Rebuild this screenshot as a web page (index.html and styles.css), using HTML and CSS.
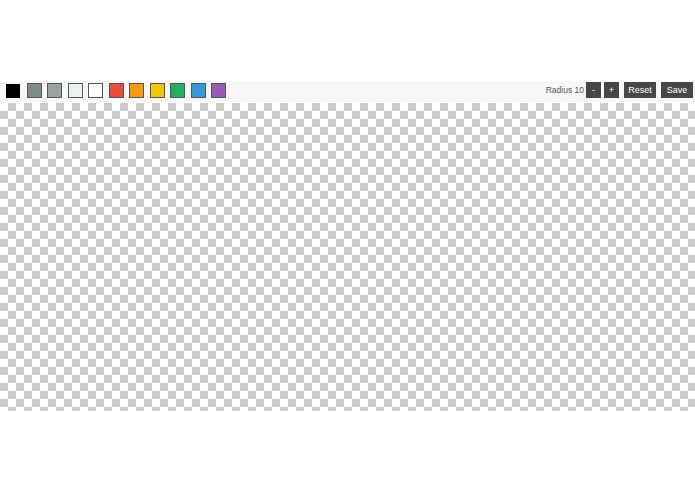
FILE: index.html
```html
<!DOCTYPE html>
<html>
<head>
<meta charset="utf-8">
<link rel="stylesheet" href="styles.css">
</head>
<body>
<div class="top-space"></div>
<div class="toolbar">
  <div class="swatches">
    <span class="swatch black"></span>
    <span class="swatch c2"></span>
    <span class="swatch c3"></span>
    <span class="swatch c4"></span>
    <span class="swatch c5"></span>
    <span class="swatch c6"></span>
    <span class="swatch c7"></span>
    <span class="swatch c8"></span>
    <span class="swatch c9"></span>
    <span class="swatch c10"></span>
    <span class="swatch c11"></span>
  </div>
  <div class="controls">
    <span class="radius">Radius 10</span>
    <button class="btn small">-</button>
    <button class="btn small">+</button>
    <button class="btn wide reset">Reset</button>
    <button class="btn wide">Save</button>
  </div>
</div>
<div class="canvas"></div>
</body>
</html>
```
FILE: styles.css
```css
html, body {
  margin: 0;
  padding: 0;
  background: #ffffff;
  font-family: "Liberation Sans", Arial, sans-serif;
}
.top-space {
  height: 81px;
}
.toolbar {
  height: 21px;
  box-sizing: border-box;
  background: #f7f7f7;
  display: flex;
  align-items: flex-start;
  justify-content: space-between;
  padding: 1px 2px 0 6px;
}
.swatches {
  display: flex;
  align-items: center;
  gap: 5.5px;
  margin-top: 1px;
}
.swatch {
  width: 15px;
  height: 15px;
  box-sizing: border-box;
  border: 1px solid #555;
  display: block;
}
.black { background: #000; border-color: #000; width: 14px; height: 14px; margin-right: 1px; }
.c2 { background: #7f8c8d; }
.c3 { background: #95a5a6; }
.c4 { background: #ecf0f1; }
.c5 { background: #ffffff; }
.c6 { background: #e74c3c; }
.c7 { background: #f39c12; }
.c8 { background: #f1c40f; }
.c9 { background: #27ae60; }
.c10 { background: #3498db; }
.c11 { background: #9b59b6; }
.controls {
  display: flex;
  align-items: center;
  height: 16px;
}
.radius {
  font-size: 8.5px;
  color: #555;
  margin-right: 2px;
}
.btn {
  border: none;
  background: #474747;
  color: #fff;
  font-family: "Liberation Sans", Arial, sans-serif;
  font-size: 9px;
  height: 16px;
  padding: 0;
  margin: 0;
  display: flex;
  align-items: center;
  justify-content: center;
}
.small {
  width: 15px;
  margin-right: 3px;
}
.wide {
  width: 32px;
}
.reset {
  margin-left: 2px;
  margin-right: 5px;
}
.canvas {
  height: 308px;
  margin-top: 1px;
  background-color: #fff;
  background-image:
    linear-gradient(45deg, #cccccc 25%, transparent 25%, transparent 75%, #cccccc 75%),
    linear-gradient(45deg, #cccccc 25%, transparent 25%, transparent 75%, #cccccc 75%);
  background-size: 16px 16px;
  background-position: 0 0, 8px 8px;
}
```
